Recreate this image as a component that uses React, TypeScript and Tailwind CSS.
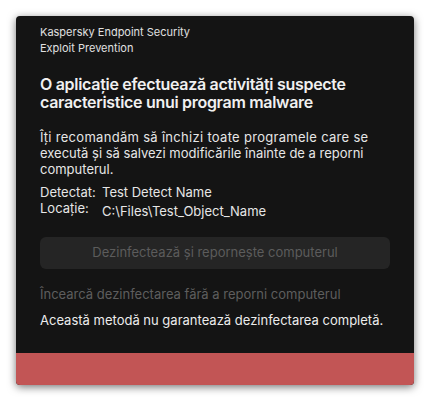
export default function App() {
    return (
        <div className="min-h-[401px] w-[430px] bg-white p-4 font-['Inter',sans-serif]">
            <div className="flex h-[369px] w-[398px] flex-col overflow-hidden rounded-[4px] bg-[#141414] shadow-[0_2px_8px_rgba(0,0,0,0.55)]">
                <div className="px-6 pt-2">
                    <div className="text-[11px] leading-[16px] text-[#e0e0e0]">
                        <div>Kaspersky Endpoint Security</div>
                        <div>Exploit Prevention</div>
                    </div>

                    <h1 className="mt-[19px] text-[16px] font-semibold leading-[18px] tracking-[-0.3px] text-[#f0f0f0]">
                        O aplicație efectuează activități suspecte
                        <br />
                        caracteristice unui program malware
                    </h1>

                    <p className="mt-[18px] text-[13px] leading-[16px] text-[#e6e6e6]">
                        <span className="tracking-[0.3px]">
                            Îți recomandăm să închizi toate programele care se
                        </span>{" "}
                        execută și să salvezi modificările înainte de a reporni
                        computerul.
                    </p>

                    <div className="mt-[7px] grid grid-cols-[62px_1fr] text-[13px] leading-[16px] text-[#e6e6e6]">
                        <span>Detectat:</span>
                        <span>Test Detect Name</span>
                        <span>Locație:</span>
                        <span className="relative top-[3px]">C:\Files\Test_Object_Name</span>
                    </div>

                    <button
                        disabled
                        className="mt-[21px] flex h-8 w-full items-center justify-center rounded-[6px] bg-[#252525] text-[13px] text-[#5c5c5c]"
                    >
                        Dezinfectează și repornește computerul
                    </button>

                    <div className="mt-[17px] text-[13px] leading-[16px] text-[#5e5e5e]">
                        Încearcă dezinfectarea fără a reporni computerul
                    </div>
                    <div className="mt-[10px] text-[13px] leading-[16px] text-[#ececec]">
                        Această metodă nu garantează dezinfectarea completă.
                    </div>
                </div>

                <div className="mt-auto h-8 bg-[#c25555]" />
            </div>
        </div>
    );
}
